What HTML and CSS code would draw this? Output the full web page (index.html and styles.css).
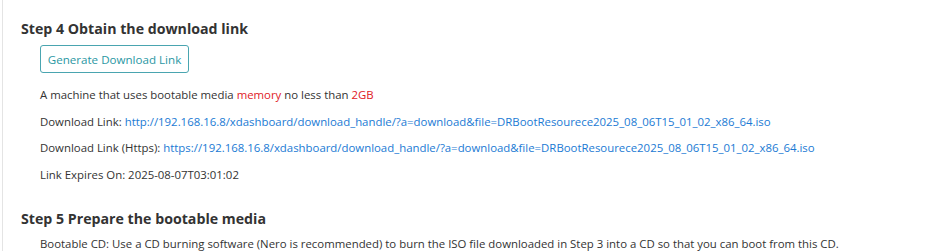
FILE: index.html
```html
<!DOCTYPE html>
<html>
<head>
<meta charset="utf-8">
<link rel="stylesheet" href="styles.css">
</head>
<body>
<div class="page">
  <section class="step">
    <h3 class="step-title">Step 4 Obtain the download link</h3>
    <div class="step-body">
      <button class="btn-outline">Generate Download Link</button>
      <p class="line">A machine that uses bootable media <span class="red">memory</span> no less than <span class="red">2GB</span></p>
      <p class="line">Download Link: <a class="link" href="#">http://192.168.16.8/xdashboard/download_handle/?a=download&amp;file=DRBootResourece2025_08_06T15_01_02_x86_64.iso</a></p>
      <p class="line">Download Link (Https): <a class="link" href="#">https://192.168.16.8/xdashboard/download_handle/?a=download&amp;file=DRBootResourece2025_08_06T15_01_02_x86_64.iso</a></p>
      <p class="line">Link Expires On: 2025-08-07T03:01:02</p>
    </div>
  </section>
  <section class="step">
    <h3 class="step-title">Step 5 Prepare the bootable media</h3>
    <div class="step-body">
      <p class="line last">Bootable CD: Use a CD burning software (Nero is recommended) to burn the ISO file downloaded in Step 3 into a CD so that you can boot from this CD.</p>
    </div>
  </section>
</div>
</body>
</html>
```

FILE: styles.css
```css
html, body {
  margin: 0;
  padding: 0;
  background: #fff;
}
body {
  font-family: "Open Sans", "Noto Sans", "Liberation Sans", sans-serif;
  color: #333;
  font-size: 11.4px;
}
.page {
  margin-left: 2px;
  border-left: 1px solid #e4e4e4;
  height: 251px;
  padding: 19px 0 0 18px;
  box-sizing: border-box;
  overflow: hidden;
}
.step-title {
  margin: 0;
  font-size: 14.2px;
  font-weight: 700;
  line-height: 20px;
  color: #333;
}
.step-body {
  padding-left: 19px;
}
.btn-outline {
  margin-top: 6px;
  height: 28px;
  width: 149px;
  padding: 0;
  border: 1px solid #4aa5b0;
  border-radius: 3px;
  background: #fff;
  color: #2a97a3;
  font-family: inherit;
  font-size: 11.6px;
}
.line {
  margin: 0;
  line-height: 26.5px;
}
.btn-outline + .line {
  margin-top: 9px;
}
.red { color: #e0201f; }
.link { color: #1a7ad4; text-decoration: none; }
.step + .step { margin-top: 21px; }
.line.last { margin-top: 6px; line-height: 18px; }
```
